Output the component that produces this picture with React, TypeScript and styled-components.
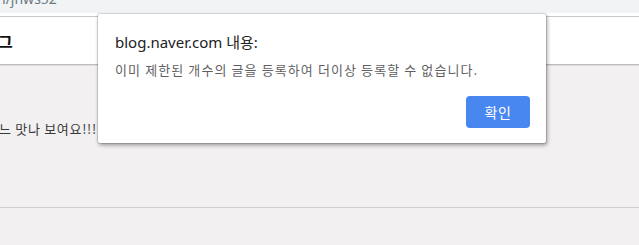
import React from "react";
import styled, { createGlobalStyle } from "styled-components";

const Global = createGlobalStyle`
  html, body { margin: 0; padding: 0; }
  body {
    width: 639px;
    height: 245px;
    overflow: hidden;
    background: #f2f0f1;
    font-family: "Noto Sans", "Noto Sans CJK KR", sans-serif;
  }
`;

const Page = styled.div`
  position: relative;
  width: 639px;
  height: 245px;
  display: flex;
  flex-direction: column;
  overflow: hidden;
`;

const UrlBar = styled.div`
  height: 13px;
  background: #f1f3f4;
  overflow: hidden;
  display: flex;
  align-items: flex-end;
`;

const UrlText = styled.span`
  font-family: "Noto Sans", sans-serif;
  font-size: 14px;
  line-height: 14px;
  color: #6b7785;
  margin-bottom: 7px;
  margin-left: -3px;
`;

const Header = styled.div`
  background: #ffffff;
  padding-top: 3px;
`;

const HeaderInner = styled.div`
  height: 47px;
  border-top: 1px solid #c9c9c9;
  border-bottom: 1px solid #bdbdbd;
  display: flex;
  align-items: center;
  box-shadow: 0 1px 0 #dedede;
`;

const BlogTitle = styled.span`
  font-family: "Noto Sans CJK KR", sans-serif;
  font-weight: 700;
  font-size: 16px;
  color: #111;
  margin-left: -2px;
  margin-top: 1px;
`;

const Content = styled.div`
  height: 141px;
  margin-top: 1px;
  border-bottom: 1px solid #cfcfcf;
  display: flex;
  align-items: flex-start;
`;

const PostText = styled.p`
  margin: 54px 0 0 -1px;
  font-family: "Noto Sans CJK KR", sans-serif;
  font-size: 13px;
  line-height: 18px;
  letter-spacing: 0.7px;
  color: #3a3a3a;
`;

const Dialog = styled.div`
  position: absolute;
  left: 98px;
  top: 14px;
  width: 448px;
  box-sizing: border-box;
  background: #fff;
  border-radius: 2px;
  box-shadow: 0 0 0 1px rgba(0, 0, 0, 0.12), 1px 2px 4px rgba(0, 0, 0, 0.4);
  padding: 18px 16px 15px 17px;
  display: flex;
  flex-direction: column;
`;

const DialogTitle = styled.div`
  font-family: "Noto Sans", "Noto Sans CJK KR", sans-serif;
  font-size: 15px;
  line-height: 20px;
  color: #202124;
`;

const DialogMessage = styled.div`
  margin-top: 9px;
  font-family: "Noto Sans CJK KR", sans-serif;
  font-size: 13px;
  line-height: 18px;
  letter-spacing: 1.1px;
  color: #5f5f63;
`;

const Actions = styled.div`
  margin-top: 17px;
  display: flex;
  justify-content: flex-end;
`;

const OkButton = styled.button`
  width: 64px;
  height: 32px;
  border: none;
  border-radius: 4px;
  background: #4886f0;
  color: #fff;
  font-family: "Noto Sans CJK KR", sans-serif;
  font-size: 14px;
  letter-spacing: 0.5px;
  padding: 0;
`;

export default function App() {
  return (
    <>
      <Global />
      <Page>
        <UrlBar>
          <UrlText>n/jnws52</UrlText>
        </UrlBar>
        <Header>
          <HeaderInner>
            <BlogTitle>그</BlogTitle>
          </HeaderInner>
        </Header>
        <Content>
          <PostText>느 맛나 보여요!!!</PostText>
        </Content>
        <Dialog>
          <DialogTitle>blog.naver.com 내용:</DialogTitle>
          <DialogMessage>이미 제한된 개수의 글을 등록하여 더이상 등록할 수 없습니다.</DialogMessage>
          <Actions>
            <OkButton>확인</OkButton>
          </Actions>
        </Dialog>
      </Page>
    </>
  );
}
